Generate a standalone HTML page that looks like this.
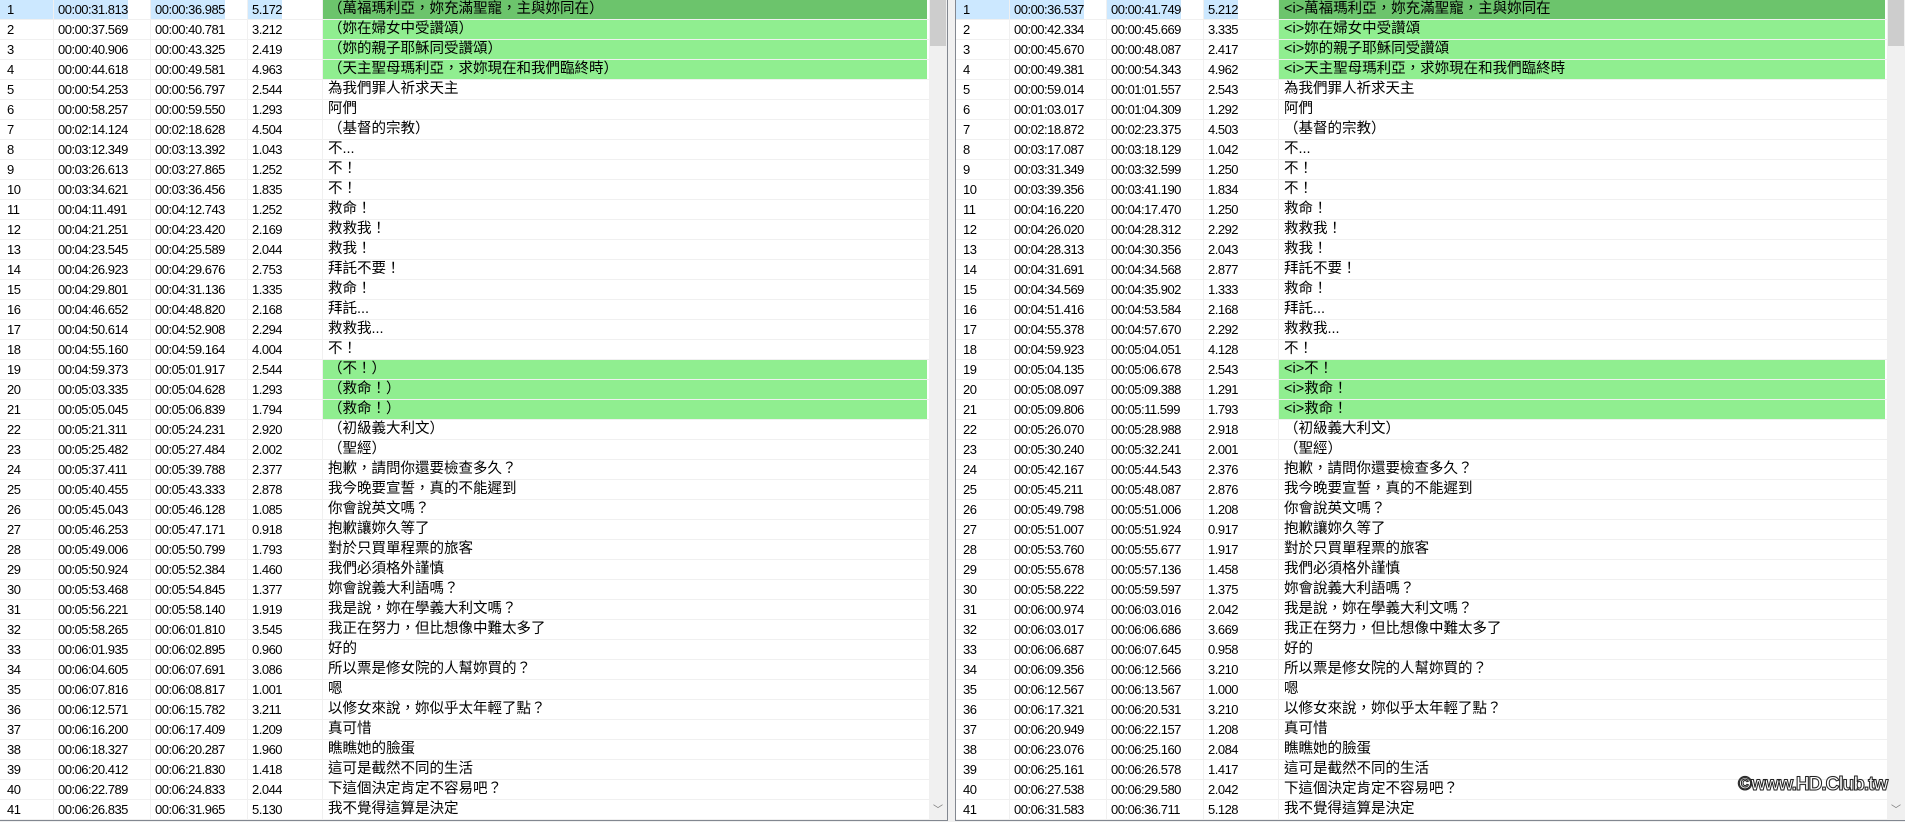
<!DOCTYPE html>
<html><head><meta charset="utf-8"><style>
*{margin:0;padding:0;box-sizing:border-box}
body{width:1905px;height:822px;background:#f0f0f0;position:relative;overflow:hidden;font-family:"Liberation Sans","Noto Sans CJK TC",sans-serif;font-size:13px;letter-spacing:-0.5px;color:#000}
.p{position:absolute;top:-1px;height:822px;background:#fff;border:1px solid #828790;overflow:hidden}
#L{left:-1px;width:949px}
#R{left:955px;width:951px}
.r{position:relative;height:20px;border-bottom:1px solid #f0f0f0;white-space:nowrap;line-height:20px}
.r span{position:absolute;top:0;height:19px}
.a{left:7px}.b{left:53px}.c{left:150px}.d{left:247px}.e{left:322px;right:0;padding-left:5px;font-size:14.5px;line-height:19px;letter-spacing:0}
.r span.b,.r span.c,.r span.d,.r span.e{border-left:1px solid #f0f0f0}
.b,.c,.d{padding-left:4px}
#L .e{right:20px}#R .e{right:20px}
.g .e{background:#90ee90}
.s .a,.s .b,.s .c,.s .d{background:#cce8ff}
.s .a{left:0;width:53px;padding-left:7px}
.s .e{background:#6cc46c}
.sb{position:absolute;top:0;right:0;width:18px;height:820px;background:#f0f0f0}
.th{position:absolute;top:0;left:1px;width:16px;height:46px;background:#cdcdcd}
.ar{position:absolute;bottom:4px;left:4px;font-size:10px;color:#777}
.wm{position:absolute;left:1738px;top:774px;font-weight:bold;font-size:19px;color:#fff;letter-spacing:-1px;-webkit-text-stroke:1px #222;font-family:"Liberation Sans",sans-serif;text-shadow:0 0 1px #000}
</style></head><body>
<div class="p" id="L">
<div class="r s g"><span class="a">1</span><span class="b">00:00:31.813</span><span class="c">00:00:36.985</span><span class="d">5.172</span><span class="e">（萬福瑪利亞，妳充滿聖寵，主與妳同在）</span></div>
<div class="r g"><span class="a">2</span><span class="b">00:00:37.569</span><span class="c">00:00:40.781</span><span class="d">3.212</span><span class="e">（妳在婦女中受讚頌）</span></div>
<div class="r g"><span class="a">3</span><span class="b">00:00:40.906</span><span class="c">00:00:43.325</span><span class="d">2.419</span><span class="e">（妳的親子耶穌同受讚頌）</span></div>
<div class="r g"><span class="a">4</span><span class="b">00:00:44.618</span><span class="c">00:00:49.581</span><span class="d">4.963</span><span class="e">（天主聖母瑪利亞，求妳現在和我們臨終時）</span></div>
<div class="r"><span class="a">5</span><span class="b">00:00:54.253</span><span class="c">00:00:56.797</span><span class="d">2.544</span><span class="e">為我們罪人祈求天主</span></div>
<div class="r"><span class="a">6</span><span class="b">00:00:58.257</span><span class="c">00:00:59.550</span><span class="d">1.293</span><span class="e">阿們</span></div>
<div class="r"><span class="a">7</span><span class="b">00:02:14.124</span><span class="c">00:02:18.628</span><span class="d">4.504</span><span class="e">（基督的宗教）</span></div>
<div class="r"><span class="a">8</span><span class="b">00:03:12.349</span><span class="c">00:03:13.392</span><span class="d">1.043</span><span class="e">不...</span></div>
<div class="r"><span class="a">9</span><span class="b">00:03:26.613</span><span class="c">00:03:27.865</span><span class="d">1.252</span><span class="e">不！</span></div>
<div class="r"><span class="a">10</span><span class="b">00:03:34.621</span><span class="c">00:03:36.456</span><span class="d">1.835</span><span class="e">不！</span></div>
<div class="r"><span class="a">11</span><span class="b">00:04:11.491</span><span class="c">00:04:12.743</span><span class="d">1.252</span><span class="e">救命！</span></div>
<div class="r"><span class="a">12</span><span class="b">00:04:21.251</span><span class="c">00:04:23.420</span><span class="d">2.169</span><span class="e">救救我！</span></div>
<div class="r"><span class="a">13</span><span class="b">00:04:23.545</span><span class="c">00:04:25.589</span><span class="d">2.044</span><span class="e">救我！</span></div>
<div class="r"><span class="a">14</span><span class="b">00:04:26.923</span><span class="c">00:04:29.676</span><span class="d">2.753</span><span class="e">拜託不要！</span></div>
<div class="r"><span class="a">15</span><span class="b">00:04:29.801</span><span class="c">00:04:31.136</span><span class="d">1.335</span><span class="e">救命！</span></div>
<div class="r"><span class="a">16</span><span class="b">00:04:46.652</span><span class="c">00:04:48.820</span><span class="d">2.168</span><span class="e">拜託...</span></div>
<div class="r"><span class="a">17</span><span class="b">00:04:50.614</span><span class="c">00:04:52.908</span><span class="d">2.294</span><span class="e">救救我...</span></div>
<div class="r"><span class="a">18</span><span class="b">00:04:55.160</span><span class="c">00:04:59.164</span><span class="d">4.004</span><span class="e">不！</span></div>
<div class="r g"><span class="a">19</span><span class="b">00:04:59.373</span><span class="c">00:05:01.917</span><span class="d">2.544</span><span class="e">（不！）</span></div>
<div class="r g"><span class="a">20</span><span class="b">00:05:03.335</span><span class="c">00:05:04.628</span><span class="d">1.293</span><span class="e">（救命！）</span></div>
<div class="r g"><span class="a">21</span><span class="b">00:05:05.045</span><span class="c">00:05:06.839</span><span class="d">1.794</span><span class="e">（救命！）</span></div>
<div class="r"><span class="a">22</span><span class="b">00:05:21.311</span><span class="c">00:05:24.231</span><span class="d">2.920</span><span class="e">（初級義大利文）</span></div>
<div class="r"><span class="a">23</span><span class="b">00:05:25.482</span><span class="c">00:05:27.484</span><span class="d">2.002</span><span class="e">（聖經）</span></div>
<div class="r"><span class="a">24</span><span class="b">00:05:37.411</span><span class="c">00:05:39.788</span><span class="d">2.377</span><span class="e">抱歉，請問你還要檢查多久？</span></div>
<div class="r"><span class="a">25</span><span class="b">00:05:40.455</span><span class="c">00:05:43.333</span><span class="d">2.878</span><span class="e">我今晚要宣誓，真的不能遲到</span></div>
<div class="r"><span class="a">26</span><span class="b">00:05:45.043</span><span class="c">00:05:46.128</span><span class="d">1.085</span><span class="e">你會說英文嗎？</span></div>
<div class="r"><span class="a">27</span><span class="b">00:05:46.253</span><span class="c">00:05:47.171</span><span class="d">0.918</span><span class="e">抱歉讓妳久等了</span></div>
<div class="r"><span class="a">28</span><span class="b">00:05:49.006</span><span class="c">00:05:50.799</span><span class="d">1.793</span><span class="e">對於只買單程票的旅客</span></div>
<div class="r"><span class="a">29</span><span class="b">00:05:50.924</span><span class="c">00:05:52.384</span><span class="d">1.460</span><span class="e">我們必須格外謹慎</span></div>
<div class="r"><span class="a">30</span><span class="b">00:05:53.468</span><span class="c">00:05:54.845</span><span class="d">1.377</span><span class="e">妳會說義大利語嗎？</span></div>
<div class="r"><span class="a">31</span><span class="b">00:05:56.221</span><span class="c">00:05:58.140</span><span class="d">1.919</span><span class="e">我是說，妳在學義大利文嗎？</span></div>
<div class="r"><span class="a">32</span><span class="b">00:05:58.265</span><span class="c">00:06:01.810</span><span class="d">3.545</span><span class="e">我正在努力，但比想像中難太多了</span></div>
<div class="r"><span class="a">33</span><span class="b">00:06:01.935</span><span class="c">00:06:02.895</span><span class="d">0.960</span><span class="e">好的</span></div>
<div class="r"><span class="a">34</span><span class="b">00:06:04.605</span><span class="c">00:06:07.691</span><span class="d">3.086</span><span class="e">所以票是修女院的人幫妳買的？</span></div>
<div class="r"><span class="a">35</span><span class="b">00:06:07.816</span><span class="c">00:06:08.817</span><span class="d">1.001</span><span class="e">嗯</span></div>
<div class="r"><span class="a">36</span><span class="b">00:06:12.571</span><span class="c">00:06:15.782</span><span class="d">3.211</span><span class="e">以修女來說，妳似乎太年輕了點？</span></div>
<div class="r"><span class="a">37</span><span class="b">00:06:16.200</span><span class="c">00:06:17.409</span><span class="d">1.209</span><span class="e">真可惜</span></div>
<div class="r"><span class="a">38</span><span class="b">00:06:18.327</span><span class="c">00:06:20.287</span><span class="d">1.960</span><span class="e">瞧瞧她的臉蛋</span></div>
<div class="r"><span class="a">39</span><span class="b">00:06:20.412</span><span class="c">00:06:21.830</span><span class="d">1.418</span><span class="e">這可是截然不同的生活</span></div>
<div class="r"><span class="a">40</span><span class="b">00:06:22.789</span><span class="c">00:06:24.833</span><span class="d">2.044</span><span class="e">下這個決定肯定不容易吧？</span></div>
<div class="r"><span class="a">41</span><span class="b">00:06:26.835</span><span class="c">00:06:31.965</span><span class="d">5.130</span><span class="e">我不覺得這算是決定</span></div>
<div class="sb"><div class="th"></div><div class="ar">﹀</div></div>
</div>
<div class="p" id="R">
<div class="r s g"><span class="a">1</span><span class="b">00:00:36.537</span><span class="c">00:00:41.749</span><span class="d">5.212</span><span class="e">&lt;i&gt;萬福瑪利亞，妳充滿聖寵，主與妳同在</span></div>
<div class="r g"><span class="a">2</span><span class="b">00:00:42.334</span><span class="c">00:00:45.669</span><span class="d">3.335</span><span class="e">&lt;i&gt;妳在婦女中受讚頌</span></div>
<div class="r g"><span class="a">3</span><span class="b">00:00:45.670</span><span class="c">00:00:48.087</span><span class="d">2.417</span><span class="e">&lt;i&gt;妳的親子耶穌同受讚頌</span></div>
<div class="r g"><span class="a">4</span><span class="b">00:00:49.381</span><span class="c">00:00:54.343</span><span class="d">4.962</span><span class="e">&lt;i&gt;天主聖母瑪利亞，求妳現在和我們臨終時</span></div>
<div class="r"><span class="a">5</span><span class="b">00:00:59.014</span><span class="c">00:01:01.557</span><span class="d">2.543</span><span class="e">為我們罪人祈求天主</span></div>
<div class="r"><span class="a">6</span><span class="b">00:01:03.017</span><span class="c">00:01:04.309</span><span class="d">1.292</span><span class="e">阿們</span></div>
<div class="r"><span class="a">7</span><span class="b">00:02:18.872</span><span class="c">00:02:23.375</span><span class="d">4.503</span><span class="e">（基督的宗教）</span></div>
<div class="r"><span class="a">8</span><span class="b">00:03:17.087</span><span class="c">00:03:18.129</span><span class="d">1.042</span><span class="e">不...</span></div>
<div class="r"><span class="a">9</span><span class="b">00:03:31.349</span><span class="c">00:03:32.599</span><span class="d">1.250</span><span class="e">不！</span></div>
<div class="r"><span class="a">10</span><span class="b">00:03:39.356</span><span class="c">00:03:41.190</span><span class="d">1.834</span><span class="e">不！</span></div>
<div class="r"><span class="a">11</span><span class="b">00:04:16.220</span><span class="c">00:04:17.470</span><span class="d">1.250</span><span class="e">救命！</span></div>
<div class="r"><span class="a">12</span><span class="b">00:04:26.020</span><span class="c">00:04:28.312</span><span class="d">2.292</span><span class="e">救救我！</span></div>
<div class="r"><span class="a">13</span><span class="b">00:04:28.313</span><span class="c">00:04:30.356</span><span class="d">2.043</span><span class="e">救我！</span></div>
<div class="r"><span class="a">14</span><span class="b">00:04:31.691</span><span class="c">00:04:34.568</span><span class="d">2.877</span><span class="e">拜託不要！</span></div>
<div class="r"><span class="a">15</span><span class="b">00:04:34.569</span><span class="c">00:04:35.902</span><span class="d">1.333</span><span class="e">救命！</span></div>
<div class="r"><span class="a">16</span><span class="b">00:04:51.416</span><span class="c">00:04:53.584</span><span class="d">2.168</span><span class="e">拜託...</span></div>
<div class="r"><span class="a">17</span><span class="b">00:04:55.378</span><span class="c">00:04:57.670</span><span class="d">2.292</span><span class="e">救救我...</span></div>
<div class="r"><span class="a">18</span><span class="b">00:04:59.923</span><span class="c">00:05:04.051</span><span class="d">4.128</span><span class="e">不！</span></div>
<div class="r g"><span class="a">19</span><span class="b">00:05:04.135</span><span class="c">00:05:06.678</span><span class="d">2.543</span><span class="e">&lt;i&gt;不！</span></div>
<div class="r g"><span class="a">20</span><span class="b">00:05:08.097</span><span class="c">00:05:09.388</span><span class="d">1.291</span><span class="e">&lt;i&gt;救命！</span></div>
<div class="r g"><span class="a">21</span><span class="b">00:05:09.806</span><span class="c">00:05:11.599</span><span class="d">1.793</span><span class="e">&lt;i&gt;救命！</span></div>
<div class="r"><span class="a">22</span><span class="b">00:05:26.070</span><span class="c">00:05:28.988</span><span class="d">2.918</span><span class="e">（初級義大利文）</span></div>
<div class="r"><span class="a">23</span><span class="b">00:05:30.240</span><span class="c">00:05:32.241</span><span class="d">2.001</span><span class="e">（聖經）</span></div>
<div class="r"><span class="a">24</span><span class="b">00:05:42.167</span><span class="c">00:05:44.543</span><span class="d">2.376</span><span class="e">抱歉，請問你還要檢查多久？</span></div>
<div class="r"><span class="a">25</span><span class="b">00:05:45.211</span><span class="c">00:05:48.087</span><span class="d">2.876</span><span class="e">我今晚要宣誓，真的不能遲到</span></div>
<div class="r"><span class="a">26</span><span class="b">00:05:49.798</span><span class="c">00:05:51.006</span><span class="d">1.208</span><span class="e">你會說英文嗎？</span></div>
<div class="r"><span class="a">27</span><span class="b">00:05:51.007</span><span class="c">00:05:51.924</span><span class="d">0.917</span><span class="e">抱歉讓妳久等了</span></div>
<div class="r"><span class="a">28</span><span class="b">00:05:53.760</span><span class="c">00:05:55.677</span><span class="d">1.917</span><span class="e">對於只買單程票的旅客</span></div>
<div class="r"><span class="a">29</span><span class="b">00:05:55.678</span><span class="c">00:05:57.136</span><span class="d">1.458</span><span class="e">我們必須格外謹慎</span></div>
<div class="r"><span class="a">30</span><span class="b">00:05:58.222</span><span class="c">00:05:59.597</span><span class="d">1.375</span><span class="e">妳會說義大利語嗎？</span></div>
<div class="r"><span class="a">31</span><span class="b">00:06:00.974</span><span class="c">00:06:03.016</span><span class="d">2.042</span><span class="e">我是說，妳在學義大利文嗎？</span></div>
<div class="r"><span class="a">32</span><span class="b">00:06:03.017</span><span class="c">00:06:06.686</span><span class="d">3.669</span><span class="e">我正在努力，但比想像中難太多了</span></div>
<div class="r"><span class="a">33</span><span class="b">00:06:06.687</span><span class="c">00:06:07.645</span><span class="d">0.958</span><span class="e">好的</span></div>
<div class="r"><span class="a">34</span><span class="b">00:06:09.356</span><span class="c">00:06:12.566</span><span class="d">3.210</span><span class="e">所以票是修女院的人幫妳買的？</span></div>
<div class="r"><span class="a">35</span><span class="b">00:06:12.567</span><span class="c">00:06:13.567</span><span class="d">1.000</span><span class="e">嗯</span></div>
<div class="r"><span class="a">36</span><span class="b">00:06:17.321</span><span class="c">00:06:20.531</span><span class="d">3.210</span><span class="e">以修女來說，妳似乎太年輕了點？</span></div>
<div class="r"><span class="a">37</span><span class="b">00:06:20.949</span><span class="c">00:06:22.157</span><span class="d">1.208</span><span class="e">真可惜</span></div>
<div class="r"><span class="a">38</span><span class="b">00:06:23.076</span><span class="c">00:06:25.160</span><span class="d">2.084</span><span class="e">瞧瞧她的臉蛋</span></div>
<div class="r"><span class="a">39</span><span class="b">00:06:25.161</span><span class="c">00:06:26.578</span><span class="d">1.417</span><span class="e">這可是截然不同的生活</span></div>
<div class="r"><span class="a">40</span><span class="b">00:06:27.538</span><span class="c">00:06:29.580</span><span class="d">2.042</span><span class="e">下這個決定肯定不容易吧？</span></div>
<div class="r"><span class="a">41</span><span class="b">00:06:31.583</span><span class="c">00:06:36.711</span><span class="d">5.128</span><span class="e">我不覺得這算是決定</span></div>
<div class="sb"><div class="th"></div><div class="ar">﹀</div></div>
</div>
<div class="wm">©www.HD.Club.tw</div>
</body></html>
